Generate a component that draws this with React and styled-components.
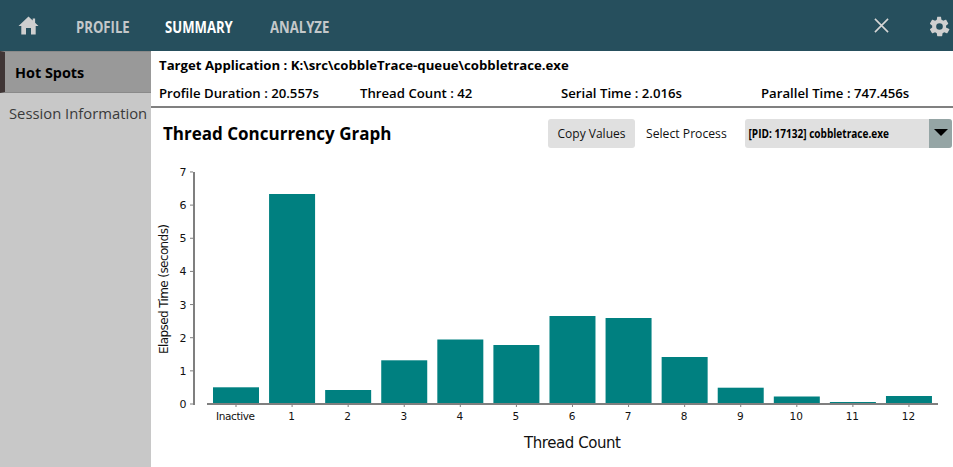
import React from 'react';
import styled, { createGlobalStyle } from 'styled-components';

const Global = createGlobalStyle`
  html, body { margin: 0; padding: 0; background: #fff; }
  body { font-family: "Open Sans", "Noto Sans", sans-serif; color: #000; }
  #root { width: 953px; height: 467px; overflow: hidden; }
`;

const Page = styled.div`
  width: 953px;
  height: 467px;
  display: flex;
  flex-direction: column;
`;

const Header = styled.header`
  height: 51px;
  flex: none;
  background: #264f5d;
  display: flex;
  align-items: center;
  box-sizing: border-box;
  padding: 0 0 0 18px;
`;

const HomeIcon = styled.svg`
  width: 21px;
  height: 19px;
  fill: #cfcfcf;
  flex: none;
`;

const NavItem = styled.span`
  font-size: 16px;
  font-weight: 700;
  transform: scaleX(0.82);
  transform-origin: left center;
  color: ${p => (p.$active ? '#ffffff' : '#c4c8ca')};
  margin-left: ${p => p.$gap}px;
  margin-top: 2px;
  width: ${p => p.$w}px;
  flex: none;
`;

const Spacer = styled.div`
  flex: 1;
`;

const CloseIcon = styled.svg`
  width: 15px;
  height: 15px;
  stroke: #d6d6d6;
  stroke-width: 1.7;
  flex: none;
  margin-right: 40px;
`;

const GearIcon = styled.svg`
  width: 21px;
  height: 21px;
  fill: #cfcfcf;
  flex: none;
  margin-right: 3px;
  margin-top: 1px;
`;

const Body = styled.div`
  flex: 1;
  display: flex;
  min-height: 0;
`;

const Sidebar = styled.nav`
  width: 151px;
  flex: none;
  background: #c8c8c8;
  display: flex;
  flex-direction: column;
`;

const SideActive = styled.div`
  height: 42px;
  box-sizing: border-box;
  border-top: 1px solid #8a8a8a;
  border-bottom: 1px solid #8a8a8a;
  border-left: 5px solid #3f3535;
  background: #999999;
  padding-left: 10px;
  display: flex;
  align-items: center;
  font-size: 14.4px;
  font-weight: 700;
  color: #000;
`;

const SideItem = styled.div`
  height: 39px;
  padding-left: 9px;
  display: flex;
  align-items: center;
  font-size: 14.8px;
  color: #3a3a3a;
  white-space: nowrap;
`;

const Main = styled.main`
  flex: 1;
  min-width: 0;
  display: flex;
  flex-direction: column;
`;

const InfoBlock = styled.section`
  height: 57px;
  flex: none;
  box-sizing: border-box;
  border-bottom: 2px solid #808080;
  display: flex;
  flex-direction: column;
  gap: 1px;
  padding-left: 8px;
`;

const InfoRow = styled.div`
  display: flex;
  height: 27px;
  flex: none;
  align-items: center;
  font-size: ${p => p.$size}px;
  font-weight: ${p => p.$weight};
  white-space: nowrap;
`;

const InfoCell = styled.span`
  width: ${p => p.$w}px;
  flex: none;
`;

const GraphBar = styled.div`
  height: 46px;
  flex: none;
  display: flex;
  align-items: center;
  padding: 5px 1px 0 12px;
  box-sizing: border-box;
`;

const Title = styled.h2`
  margin: 0;
  font-size: 17px;
  font-weight: 700;
  flex: 1;
`;

const CopyButton = styled.button`
  width: 87px;
  height: 29px;
  border: 0;
  border-radius: 3px;
  background: #e0e0e0;
  font: 12px "Open Sans", sans-serif;
  color: #111;
  padding: 0;
`;

const SelectLabel = styled.span`
  font-size: 12.2px;
  margin-left: 11px;
  width: 99px;
  color: #111;
`;

const Select = styled.div`
  width: 207px;
  height: 29px;
  border-radius: 3px;
  background: #e0e0e0;
  display: flex;
  align-items: center;
  overflow: hidden;
`;

const SelectText = styled.span`
  flex: 1;
  font-size: 11.5px;
  font-weight: 700;
  padding-left: 4px;
  white-space: nowrap;
  transform: scaleX(0.875);
  transform-origin: left center;
`;

const SelectArrow = styled.span`
  width: 23px;
  height: 100%;
  background: #95a5a5;
  display: flex;
  align-items: center;
  justify-content: center;
  &::after {
    content: "";
    border-left: 7px solid transparent;
    border-right: 7px solid transparent;
    border-top: 7px solid #000;
    margin-bottom: 3px;
  }
`;

const ChartWrap = styled.div`
  flex: 1;
  min-height: 0;
`;

const ChartSvg = styled.svg`
  display: block;
  width: 802px;
  height: 313px;
`;

const labelFont = '"DejaVu Sans", sans-serif';
const STEP = 56.08;
const bars = [
  ['Inactive', 387.3], ['1', 194], ['2', 390], ['3', 360.3], ['4', 339.5], ['5', 345],
  ['6', 316], ['7', 318], ['8', 357], ['9', 387.7], ['10', 396.5], ['11', 402], ['12', 396],
];

function Chart() {
  const bx = x => x - 151;
  const by = y => y - 154;
  return (
    <ChartWrap>
      <ChartSvg viewBox="0 0 802 313">
        <g fill="#008080">
          {bars.map(([l, top], i) => (
            <rect key={l} x={bx(213 + i * STEP)} y={by(top)} width={46} height={404 - top} />
          ))}
        </g>
        <rect x={bx(193)} y={by(172)} width={2} height={233} fill="#7f7f7f" />
        <rect x={bx(207)} y={by(403)} width={731} height={2} fill="#7f7f7f" />
        {[0, 1, 2, 3, 4, 5, 6, 7].map(v => {
          const y = 404 - v * 33.15;
          return (
            <g key={v}>
              <rect x={bx(190)} y={by(y) - 0.5} width={3} height={1} fill="#7f7f7f" />
              <text x={bx(183)} y={by(y) + 4} fontSize="11" fontFamily={labelFont} textAnchor="middle" fill="#111">{v}</text>
            </g>
          );
        })}
        {bars.map(([l], i) => (
          <g key={l}>
            <rect x={bx(235.5 + i * STEP)} y={by(405)} width={1} height={2} fill="#7f7f7f" />
            <text x={bx(235.5 + i * STEP)} y={by(420)} fontSize="10.5" fontFamily={labelFont} textAnchor="middle" fill="#111" textLength={l === 'Inactive' ? 39 : undefined}>{l}</text>
          </g>
        ))}
        <text transform={`translate(${bx(168)} ${by(289)}) rotate(-90)`} fontSize="12" fontFamily={labelFont} textAnchor="middle" fill="#111" textLength={130}>Elapsed Time  (seconds)</text>
        <text x={bx(572.5)} y={by(448)} fontSize="15" fontFamily={labelFont} textAnchor="middle" fill="#111" textLength={97}>Thread Count</text>
      </ChartSvg>
    </ChartWrap>
  );
}

export default function App() {
  return (
    <Page>
      <Global />
      <Header>
        <HomeIcon viewBox="0 0 21 19"><path d="M10.5 0.5 0.5 10h2.8v8.5H8v-6.5h5v6.5h4.7V10h2.8l-3.4-3.3V2.5h-2.4v1.9z" /></HomeIcon>
        <NavItem $gap={37} $w={89}>PROFILE</NavItem>
        <NavItem $gap={0} $w={105} $active>SUMMARY</NavItem>
        <NavItem $gap={0} $w={80}>ANALYZE</NavItem>
        <Spacer />
        <CloseIcon viewBox="0 0 16 16"><path d="M1 1 15 15M15 1 1 15" /></CloseIcon>
        <GearIcon viewBox="0 0 24 24"><path fillRule="evenodd" d="M19.4 13c.1-.3.1-.7.1-1s0-.7-.1-1l2.4-1.9c.2-.2.3-.4.1-.7l-2.3-4c-.1-.2-.4-.3-.7-.2l-2.8 1.1c-.6-.4-1.2-.8-1.9-1l-.4-3c0-.3-.3-.5-.6-.5H9.9c-.3 0-.5.2-.6.5l-.4 3c-.7.3-1.3.6-1.9 1L4.2 4.2c-.3-.1-.5 0-.7.2l-2.3 4c-.2.3-.1.5.1.7L3.7 11c-.1.3-.1.7-.1 1s0 .7.1 1l-2.4 1.9c-.2.2-.3.4-.1.7l2.3 4c.1.2.4.3.7.2l2.8-1.1c.6.4 1.2.8 1.9 1l.4 3c0 .3.3.5.6.5h4.6c.3 0 .5-.2.6-.5l.4-3c.7-.3 1.3-.6 1.9-1l2.8 1.1c.3.1.5 0 .7-.2l2.3-4c.2-.3.1-.5-.1-.7zM12 15.8a3.8 3.8 0 1 1 0-7.6 3.8 3.8 0 0 1 0 7.6z" /></GearIcon>
      </Header>
      <Body>
        <Sidebar>
          <SideActive>Hot Spots</SideActive>
          <SideItem>Session Information</SideItem>
        </Sidebar>
        <Main>
          <InfoBlock>
            <InfoRow $size={13.2} $weight={700}>Target Application : K:\src\cobbleTrace-queue\cobbletrace.exe</InfoRow>
            <InfoRow $size={13.2} $weight={600}>
              <InfoCell $w={201}>Profile Duration : 20.557s</InfoCell>
              <InfoCell $w={201}>Thread Count : 42</InfoCell>
              <InfoCell $w={200}>Serial Time : 2.016s</InfoCell>
              <InfoCell $w={190}>Parallel Time : 747.456s</InfoCell>
            </InfoRow>
          </InfoBlock>
          <GraphBar>
            <Title>Thread Concurrency Graph</Title>
            <CopyButton>Copy Values</CopyButton>
            <SelectLabel>Select Process</SelectLabel>
            <Select>
              <SelectText>[PID: 17132] cobbletrace.exe</SelectText>
              <SelectArrow />
            </Select>
          </GraphBar>
          <Chart />
        </Main>
      </Body>
    </Page>
  );
}
